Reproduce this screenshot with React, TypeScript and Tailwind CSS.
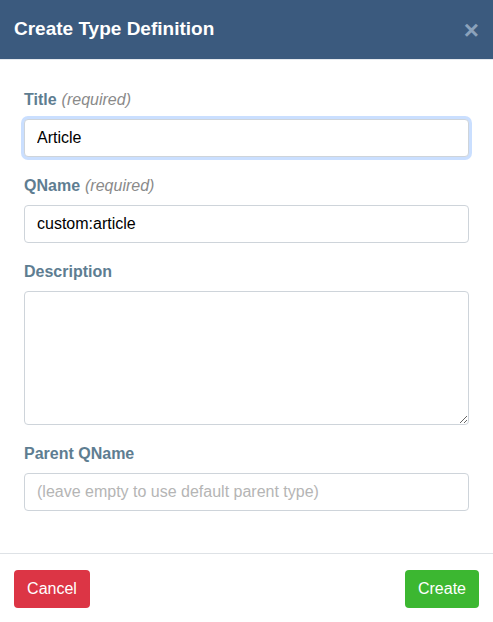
import React from "react";

const font = { fontFamily: '"Liberation Sans", Arial, sans-serif' };

interface FieldProps {
  label: string;
  required?: boolean;
  children: React.ReactNode;
}

const Field = ({ label, required, children }: FieldProps) => (
  <div className="flex flex-col">
    <label className="mb-[9px] text-[16px] font-bold leading-[21px] text-[#5e7d91]">
      {label}
      {required && <span className="ml-[5px] font-normal italic text-[#8a8a8a]">(required)</span>}
    </label>
    {children}
  </div>
);

const inputClass =
  "h-[38px] w-full rounded-[4px] border border-[#ced4da] bg-white px-3 text-[16px] text-black outline-none placeholder:text-[#b5b5b5]";

const App = () => {
  return (
    <div className="flex h-[622px] w-[493px] flex-col bg-white" style={font}>
      {/* Header */}
      <div className="flex h-[60px] items-center justify-between border-b border-[#e5e9ee] bg-[#3b5a7e] pl-[14px] pr-[14px]">
        <h1 className="text-[19px] font-bold text-white">Create Type Definition</h1>
        <span className="text-[26px] font-bold leading-none text-[#8ba2bb]">×</span>
      </div>

      {/* Body */}
      <div className="flex flex-col gap-[18px] px-6 pb-[42px] pt-[29px]">
        <Field label="Title" required>
          <input
            className={`${inputClass} border-[#86b7fe] shadow-[0_0_0_3px_rgba(13,110,253,0.22)]`}
            defaultValue="Article"
          />
        </Field>
        <Field label="QName" required>
          <input className={inputClass} defaultValue="custom:article" />
        </Field>
        <Field label="Description">
          <textarea className="h-[134px] w-full rounded-[4px] border border-[#ced4da] bg-white px-3 py-2 text-[16px] outline-none" />
        </Field>
        <Field label="Parent QName">
          <input className={inputClass} placeholder="(leave empty to use default parent type)" />
        </Field>
      </div>

      {/* Footer */}
      <div className="flex items-center justify-between border-t border-[#dee2e6] px-[14px] pt-[16px]">
        <button className="h-[38px] w-[76px] rounded-[4px] bg-[#dc3545] text-[16px] text-white">Cancel</button>
        <button className="h-[38px] w-[74px] rounded-[4px] bg-[#3cb731] text-[16px] text-white">Create</button>
      </div>
    </div>
  );
};

export default App;
